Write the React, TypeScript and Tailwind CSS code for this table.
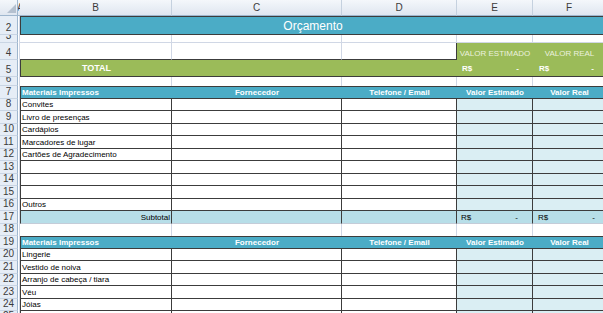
import React from "react";

const WB = "w-[152px]";
const WC = "w-[170px]";
const WD = "w-[115px]";
const WE = "w-[76px]";
const WF = "w-[73px]";

type CellProps = {
  w: string;
  cls?: string;
  j?: string;
  children?: React.ReactNode;
};

function Cell({ w, cls = "", j = "justify-start", children }: CellProps) {
  return (
    <div
      className={`${w} h-full shrink-0 flex items-end overflow-hidden whitespace-nowrap leading-none pb-[1px] ${j} ${cls}`}
    >
      {children}
    </div>
  );
}

function RowHead({ n }: { n: string }) {
  return (
    <div className="w-[18px] h-full shrink-0 overflow-hidden bg-[#e6edf6] border-r border-b border-r-[#9eb6ce] border-b-[#c9d5e4] flex items-end justify-center text-[10px] leading-none text-[#3b3b3b] pb-[1px]">
      {n}
    </div>
  );
}

function Row({ h, n, children }: { h: string; n: string; children?: React.ReactNode }) {
  return (
    <div className={`flex shrink-0 ${h}`}>
      <RowHead n={n} />
      <div className="w-[2px] h-full shrink-0 border-r border-[#d0d7e5]" />
      {children}
    </div>
  );
}

const gB = "border-r border-b border-[#d0d7e5]";
const gR = "border-r border-[#d0d7e5]";

const dB = "bg-white border-l border-r border-b border-[#3c3c3c] pl-[1px]";
const dC = "bg-white border-r border-b border-[#3c3c3c]";
const dE = "bg-[#daeef3] border-r border-b border-[#3c3c3c]";

function DataRow({ h, n, text }: { h: string; n: string; text?: string }) {
  return (
    <Row h={h} n={n}>
      <Cell w={WB} cls={dB}>
        <span className="text-[8px] text-black">{text}</span>
      </Cell>
      <Cell w={WC} cls={dC} />
      <Cell w={WD} cls={dC} />
      <Cell w={WE} cls={dE} />
      <Cell w={WF} cls={dE} />
    </Row>
  );
}

function HeaderRow({ n }: { n: string }) {
  const t = "text-[8px] font-bold text-white";
  return (
    <Row h="h-[13px]" n={n}>
      <Cell w={WB} cls="bg-[#4bacc6] border-l border-t border-b border-[#3c3c3c] pl-[1px]">
        <span className={t}>Materiais Impressos</span>
      </Cell>
      <Cell w={WC} j="justify-center" cls="bg-[#4bacc6] border-t border-b border-[#3c3c3c]">
        <span className={t}>Fornecedor</span>
      </Cell>
      <Cell w={WD} j="justify-center" cls="bg-[#4bacc6] border-t border-b border-[#3c3c3c]">
        <span className={t}>Telefone / Email</span>
      </Cell>
      <Cell w={WE} j="justify-center" cls="bg-[#4bacc6] border-t border-b border-[#3c3c3c]">
        <span className={t}>Valor Estimado</span>
      </Cell>
      <Cell w={WF} j="justify-center" cls="bg-[#4bacc6] border-t border-b border-[#3c3c3c]">
        <span className={t}>Valor Real</span>
      </Cell>
    </Row>
  );
}

function ColHead({ w, label, cls = "" }: { w: string; label: string; cls?: string }) {
  return (
    <div
      className={`${w} h-full shrink-0 overflow-hidden flex items-center justify-center bg-linear-to-b from-[#f4f7fb] to-[#dfe6f0] border-r border-b border-r-[#c5d1df] border-b-[#9eb6ce] text-[10px] leading-none text-[#3b3b3b] ${cls}`}
    >
      {label}
    </div>
  );
}

const hs = ["h-[12px]", "h-[13px]"];

export default function App() {
  const group1 = [
    "Convites",
    "Livro de presenças",
    "Cardápios",
    "Marcadores de lugar",
    "Cartões de Agradecimento",
    "",
    "",
    "",
    "Outros",
  ];
  const group2 = ["Lingerie", "Vestido de noiva", "Arranjo de cabeça / tiara", "Véu", "Jóias"];

  return (
    <div className="w-[603px] h-[313px] overflow-hidden bg-white font-['Liberation_Sans',Arial,sans-serif] flex flex-col">
      {/* column headers */}
      <div className="flex shrink-0 h-[16px]">
        <div className="w-[18px] h-full shrink-0 bg-linear-to-b from-[#f4f7fb] to-[#dfe6f0] border-r border-b border-r-[#9eb6ce] border-b-[#9eb6ce] relative">
          <svg className="absolute left-[7px] top-[4px]" width="9" height="9" viewBox="0 0 9 9">
            <polygon points="9,0 9,9 0,9" fill="#b4c0cf" />
          </svg>
        </div>
        <div className="w-[2px] h-full shrink-0 overflow-hidden bg-linear-to-b from-[#f4f7fb] to-[#dfe6f0] border-b border-[#9eb6ce] flex items-center">
          <span className="text-[10px] leading-none text-[#3b3b3b] -ml-[1px]">A</span>
        </div>
        <ColHead w={WB} label="B" />
        <ColHead w={WC} label="C" />
        <ColHead w={WD} label="D" />
        <ColHead w={WE} label="E" />
        <ColHead w={WF} label="F" />
      </div>

      {/* row 2 title */}
      <Row h="h-[19px]" n="2">
        <div className="w-[586px] h-full shrink-0 bg-[#4bacc6] border border-[#3c3c3c] flex items-center justify-center">
          <span className="text-[12px] leading-none text-white">Orçamento</span>
        </div>
      </Row>

      {/* row 3 */}
      <Row h="h-[8px]" n="3">
        <Cell w={WB} cls={gB} />
        <Cell w={WC} cls={gB} />
        <Cell w={WD} cls={gB} />
        <Cell w={WE} cls={gB} />
        <Cell w={WF} cls={gB} />
      </Row>

      {/* row 4 */}
      <Row h="h-[17px]" n="4">
        <Cell w={WB} cls="border-r border-b border-r-[#d0d7e5] border-b-[#3c3c3c]" />
        <Cell w={WC} cls="border-r border-b border-r-[#d0d7e5] border-b-[#3c3c3c]" />
        <Cell w={WD} cls="border-r border-b border-[#3c3c3c]" />
        <Cell w={WE} j="justify-center" cls="bg-[#9bbb59] pb-[2px]">
          <span className="text-[8px] text-[#ebf1de]">VALOR ESTIMADO</span>
        </Cell>
        <Cell w={WF} j="justify-center" cls="bg-[#9bbb59] pb-[2px]">
          <span className="text-[8px] text-[#ebf1de]">VALOR REAL</span>
        </Cell>
      </Row>

      {/* row 5 total */}
      <Row h="h-[17px]" n="5">
        <Cell w={WB} j="justify-center" cls="bg-[#9bbb59] border-l border-b border-[#3c3c3c] pb-[3px]">
          <span className="text-[9px] font-bold text-white">TOTAL</span>
        </Cell>
        <Cell w={WC} cls="bg-[#9bbb59] border-b border-[#3c3c3c]" />
        <Cell w={WD} cls="bg-[#9bbb59] border-b border-[#3c3c3c]" />
        <Cell w={WE} j="justify-between" cls="bg-[#9bbb59] border-b border-[#3c3c3c] pl-[5px] pr-[14px] pb-[3px]">
          <span className="text-[8px] font-bold text-white">R$</span>
          <span className="text-[8px] font-bold text-white">-</span>
        </Cell>
        <Cell w={WF} j="justify-between" cls="bg-[#9bbb59] border-b border-[#3c3c3c] pl-[6px] pr-[12px] pb-[3px]">
          <span className="text-[8px] font-bold text-white">R$</span>
          <span className="text-[8px] font-bold text-white">-</span>
        </Cell>
      </Row>

      {/* row 6 */}
      <Row h="h-[9px]" n="6">
        <Cell w={WB} cls={gR} />
        <Cell w={WC} cls={gR} />
        <Cell w={WD} cls={gR} />
        <Cell w={WE} cls={gR} />
        <Cell w={WF} cls={gR} />
      </Row>

      <HeaderRow n="7" />

      {group1.map((t, i) => (
        <DataRow key={"a" + i} h={hs[i % 2]} n={String(8 + i)} text={t} />
      ))}

      {/* row 17 subtotal */}
      <Row h="h-[13px]" n="17">
        <Cell w={WB} j="justify-end" cls="bg-[#b7dee8] border-l border-r border-b border-l-[#3c3c3c] border-r-[#3c3c3c] border-b-[#c4ccd8] pr-[1px]">
          <span className="text-[8px] text-black">Subtotal</span>
        </Cell>
        <Cell w={WC} cls="bg-[#b7dee8] border-r border-b border-r-[#3c3c3c] border-b-[#c4ccd8]" />
        <Cell w={WD} cls="bg-[#b7dee8] border-r border-b border-r-[#3c3c3c] border-b-[#c4ccd8]" />
        <Cell w={WE} j="justify-between" cls="bg-[#b7dee8] border-r border-b border-r-[#3c3c3c] border-b-[#c4ccd8] pl-[4px] pr-[14px]">
          <span className="text-[8px] text-black">R$</span>
          <span className="text-[8px] text-black">-</span>
        </Cell>
        <Cell w={WF} j="justify-between" cls="bg-[#b7dee8] border-r border-b border-r-[#3c3c3c] border-b-[#c4ccd8] pl-[5px] pr-[10px]">
          <span className="text-[8px] text-black">R$</span>
          <span className="text-[8px] text-black">-</span>
        </Cell>
      </Row>

      {/* row 18 */}
      <Row h="h-[12px]" n="18">
        <Cell w={WB} cls={gR} />
        <Cell w={WC} cls={gR} />
        <Cell w={WD} cls={gR} />
        <Cell w={WE} cls={gR} />
        <Cell w={WF} cls={gR} />
      </Row>

      <HeaderRow n="19" />

      {group2.map((t, i) => (
        <DataRow key={"b" + i} h={hs[i % 2]} n={String(20 + i)} text={t} />
      ))}

      <DataRow h="h-[12px]" n="25" />
    </div>
  );
}
